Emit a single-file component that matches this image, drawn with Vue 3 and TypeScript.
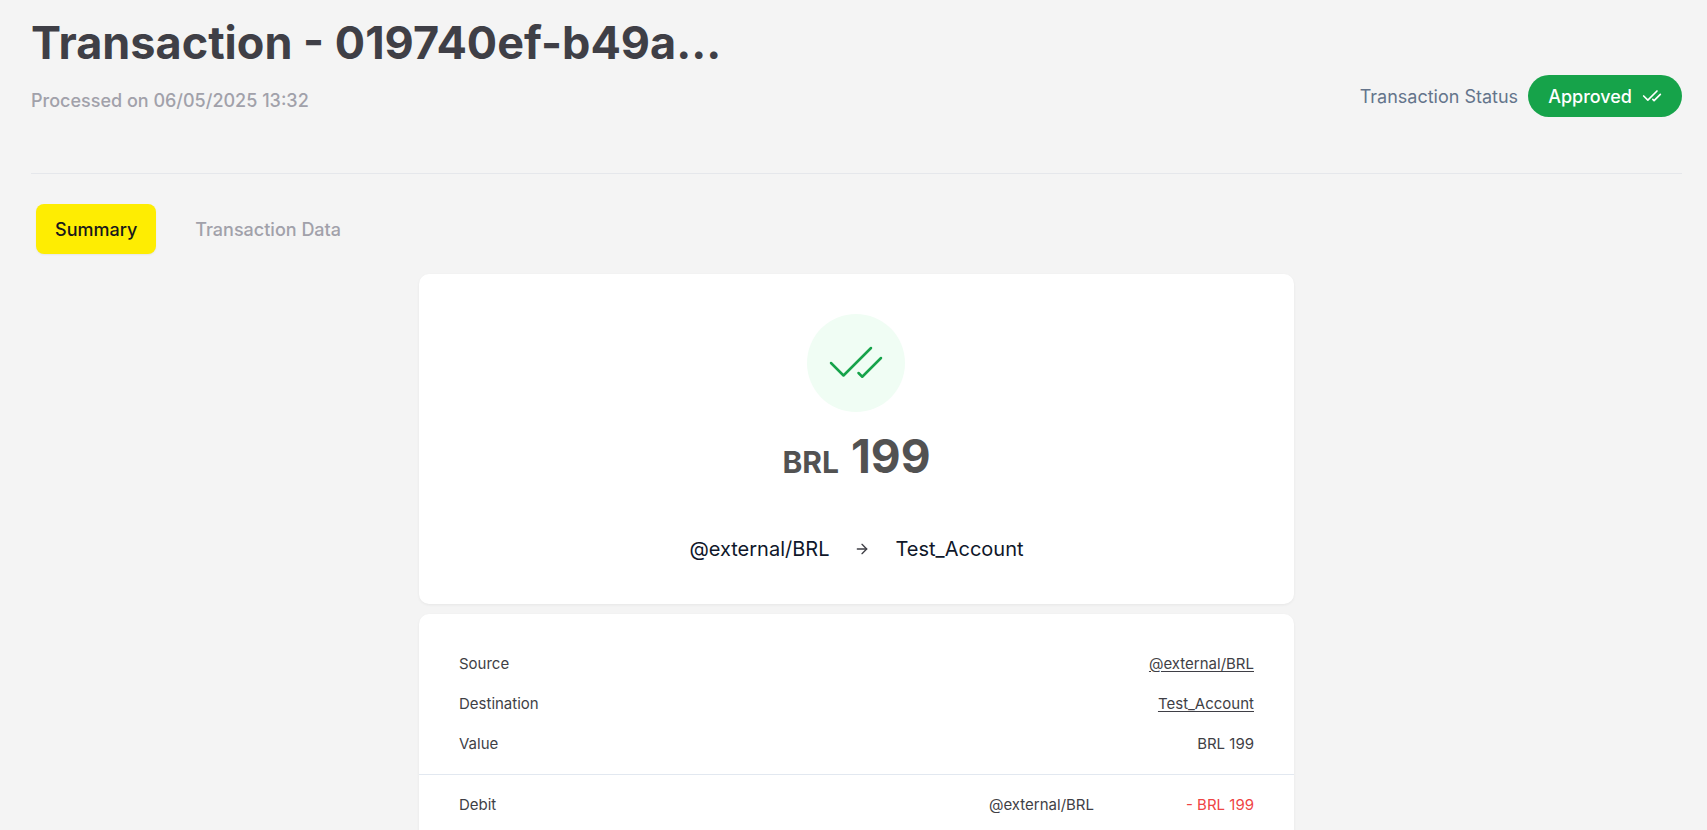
<script setup lang="ts">
interface Detail {
  label: string
  value: string
  href?: string
}

const details: Detail[] = [
  { label: 'Source', value: '@external/BRL', href: '#source' },
  { label: 'Destination', value: 'Test_Account', href: '#destination' },
  { label: 'Value', value: 'BRL 199' },
]

const operations = [{ kind: 'Debit', account: '@external/BRL', amount: '- BRL 199' }]
</script>

<template>
  <main class="page">
    <header class="header">
      <div>
        <h1 class="title">Transaction - 019740ef-b49a...</h1>
        <p class="processed">Processed on 06/05/2025 13:32</p>
      </div>
      <div class="status">
        <span>Transaction Status</span>
        <span class="badge">
          Approved
          <svg class="badge-icon" viewBox="0 0 24 24" aria-hidden="true">
            <path d="M18 6 7 17l-5-5" />
            <path d="m22 10-7.5 7.5L13 16" />
          </svg>
        </span>
      </div>
    </header>

    <nav class="tabs" role="tablist">
      <button class="tab active" type="button" role="tab" aria-selected="true">Summary</button>
      <button class="tab" type="button" role="tab" aria-selected="false">Transaction Data</button>
    </nav>

    <div class="cards">
      <section class="card receipt">
        <div class="circle">
          <svg class="circle-icon" viewBox="0 0 24 24" aria-hidden="true">
            <path d="M18 6 7 17l-5-5" />
            <path d="m22 10-7.5 7.5L13 16" />
          </svg>
        </div>
        <p class="amount"><span class="currency">BRL</span><span>199</span></p>
        <div class="route">
          <span>@external/BRL</span>
          <svg class="arrow" viewBox="0 0 24 24" aria-hidden="true">
            <path d="M5 12h14" />
            <path d="m12 5 7 7-7 7" />
          </svg>
          <span>Test_Account</span>
        </div>
      </section>

      <section class="card">
        <dl class="details">
          <div v-for="item in details" :key="item.label" class="row">
            <dt>{{ item.label }}</dt>
            <dd>
              <a v-if="item.href" :href="item.href">{{ item.value }}</a>
              <template v-else>{{ item.value }}</template>
            </dd>
          </div>
        </dl>
        <dl class="operations">
          <div v-for="op in operations" :key="op.kind" class="row">
            <dt>{{ op.kind }}</dt>
            <dd>{{ op.account }}</dd>
            <dd class="debit">{{ op.amount }}</dd>
          </div>
        </dl>
      </section>
    </div>
  </main>
</template>

<style>
body {
  background: #f4f4f4;
  overflow: hidden;
}
</style>

<style scoped>
.page {
  box-sizing: border-box;
  height: 100vh;
  overflow: hidden;
  padding: 15px 25px 0 31px;
  font-family: Inter, 'Liberation Sans', sans-serif;
  color: #3f3f46;
}

svg {
  fill: none;
  stroke: currentColor;
  stroke-linecap: round;
  stroke-linejoin: round;
  flex: none;
}

h1,
p,
dl,
dd {
  margin: 0;
}

.header {
  display: flex;
  align-items: flex-end;
  justify-content: space-between;
  padding-bottom: 56px;
  border-bottom: 1px solid #e5e7eb;
}

.title {
  font-size: 45px;
  line-height: 56px;
  font-weight: 700;
  color: #3f3f46;
}

.processed {
  margin-top: 14px;
  font-size: 18px;
  line-height: 32px;
  font-weight: 500;
  color: #a1a1aa;
}

.status {
  display: flex;
  align-items: center;
  gap: 10px;
  font-size: 18px;
  color: #64748b;
}

.badge {
  display: flex;
  align-items: center;
  gap: 10px;
  height: 42px;
  padding: 0 20px;
  border-radius: 21px;
  background: #16a34a;
  color: #fff;
  font-weight: 500;
}

.badge-icon {
  width: 20px;
  height: 20px;
  stroke-width: 2;
}

.tabs {
  display: flex;
  gap: 20px;
  padding: 30px 5px 20px;
}

.tab {
  height: 50px;
  padding: 0 19px;
  border: 0;
  border-radius: 8px;
  background: transparent;
  color: #a1a1aa;
  font: 500 18px Inter, 'Liberation Sans', sans-serif;
}

.tab.active {
  background: #feed02;
  color: #18181b;
  box-shadow: 0 1px 2px rgba(0, 0, 0, 0.06);
}

.cards {
  display: flex;
  flex-direction: column;
  gap: 10px;
  width: 53%;
  margin: 0 auto;
}

.card {
  border-radius: 10px;
  background: #fff;
  box-shadow: 0 1px 3px rgba(0, 0, 0, 0.06);
}

.receipt {
  display: flex;
  flex-direction: column;
  align-items: center;
  padding: 40px;
}

.circle {
  display: flex;
  align-items: center;
  justify-content: center;
  width: 98px;
  height: 98px;
  border-radius: 50%;
  background: #f0fdf4;
  color: #16a34a;
}

.circle-icon {
  width: 60px;
  height: 60px;
  stroke-width: 1;
}

.amount {
  display: flex;
  align-items: baseline;
  gap: 12px;
  margin-top: 16px;
  font-size: 46px;
  line-height: 56px;
  font-weight: 700;
  color: #525252;
}

.currency {
  font-size: 30px;
}

.route {
  display: flex;
  align-items: center;
  gap: 25px;
  margin-top: 44px;
  font-size: 20px;
  line-height: 30px;
  color: #0f172a;
}

.arrow {
  width: 16px;
  height: 16px;
  stroke-width: 2;
  color: #3f3f46;
}

.details {
  display: grid;
  gap: 20px;
  padding: 40px 40px 20px;
  border-bottom: 1px solid #e2e8f0;
}

.operations {
  padding: 20px 40px 40px;
}

.row {
  display: flex;
  font-size: 15px;
  line-height: 20px;
}

.row dt {
  flex: 1;
}

.row a {
  color: inherit;
  text-underline-offset: 2px;
}

.row .debit {
  width: 160px;
  text-align: right;
  color: #ef4444;
}
</style>
